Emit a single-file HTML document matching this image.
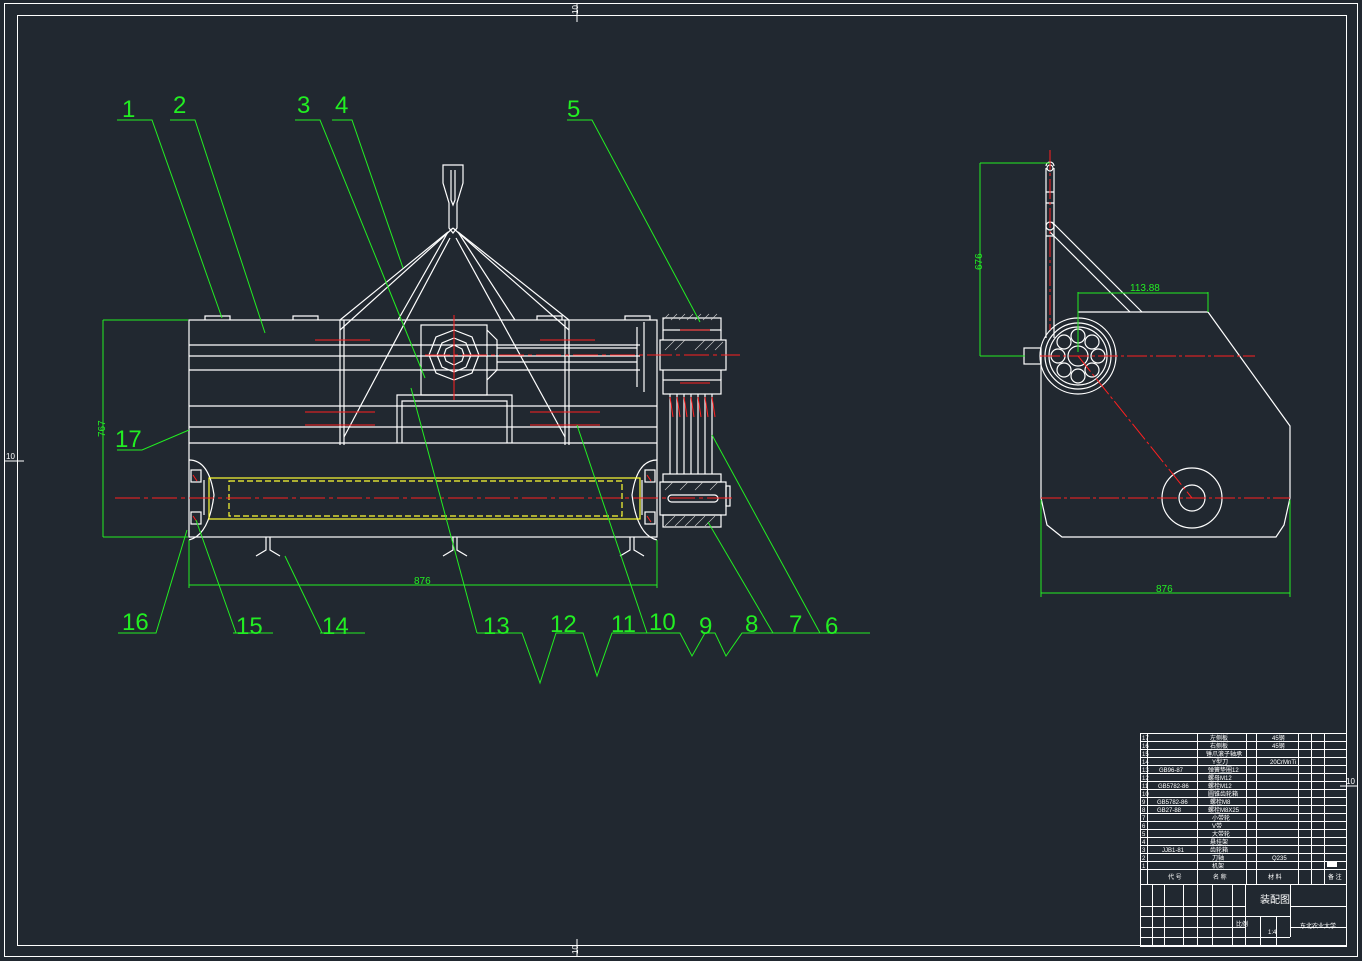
<!DOCTYPE html>
<html><head><meta charset="utf-8"><style>
html,body{margin:0;padding:0;background:#212830;}
svg{display:block}
text{font-family:"Liberation Sans","Noto Sans CJK SC",sans-serif;}
</style></head><body>
<svg width="1362" height="961" viewBox="0 0 1362 961" xmlns="http://www.w3.org/2000/svg">
<rect width="1362" height="961" fill="#212830"/>
<g fill="none" stroke="#ffffff" stroke-width="1">
<rect x="4.5" y="3.5" width="1353" height="953"/>
<rect x="17.5" y="15.5" width="1329" height="930"/>
<line x1="577" y1="3" x2="577" y2="22"/><line x1="577" y1="939" x2="577" y2="957"/>
<line x1="4" y1="461" x2="24" y2="461"/><line x1="1340" y1="786" x2="1358" y2="786"/>
</g>
<g fill="#fff" font-size="8"><text x="572" y="12" transform="rotate(-90 576 10)">10</text><text x="572" y="952" transform="rotate(-90 576 950)">10</text><text x="6" y="459">10</text><text x="1346" y="784">10</text></g>

<!-- FRONT VIEW -->
<g fill="none" stroke="#ffffff" stroke-width="1.2">
<rect x="189" y="320" width="468" height="217"/>
<line x1="189" y1="345" x2="640" y2="345"/><line x1="189" y1="356" x2="640" y2="356"/>
<line x1="189" y1="370" x2="640" y2="370"/><line x1="189" y1="406" x2="657" y2="406"/>
<line x1="189" y1="427" x2="657" y2="427"/><line x1="189" y1="443" x2="657" y2="443"/>
<path d="M205 320 v-4 h25 v4 M293 320 v-4 h25 v4 M537 320 v-4 h25 v4 M625 320 v-4 h25 v4"/>
<path d="M340 320 v125 M344 320 v125 M565 320 v125 M569 320 v125"/>
<path d="M443 165 h20 v18 l-6 20 v25 l-4 5 l-4 -5 v-25 l-6 -20 z"/>
<path d="M451 170 v30 l2 5 l2 -5 v-30"/>
<path d="M448 232 L340 320 M458 232 L569 320 M450 238 L344 437 M456 238 L565 437 M448 232 L398 320 M458 232 L515 320"/>
<path d="M453 228 L340 330 M453 228 L569 330"/>
<rect x="421" y="325" width="66" height="70"/>
<polygon points="454,330 472,337 479,355 472,373 454,380 436,373 429,355 436,337"/>
<polygon points="454,338 466,343 471,355 466,367 454,372 442,367 437,355 442,343"/>
<polygon points="454,345 462,349 464,355 462,361 454,365 446,361 444,355 446,349"/>
<path d="M487 330 l10 10 v30 l-10 10"/>
<path d="M497 348 h140 M497 362 h140"/>
<path d="M637 327 v60 M644 322 v70"/>
<path d="M397 443 v-48 h115 v48 M402 443 v-42 h105 v42"/>
<rect x="663" y="318" width="58" height="12"/>
<rect x="660" y="340" width="66" height="30"/>
<rect x="663" y="380" width="58" height="14"/>
<path d="M663 330 v10 M721 330 v10 M663 370 v10 M721 370 v10"/>
<path d="M670 394 v80 M677 394 v80 M684 394 v80 M691 394 v80 M698 394 v80 M705 394 v80 M712 394 v80"/>
<rect x="660" y="482" width="66" height="33"/>
<rect x="663" y="474" width="58" height="8"/><rect x="663" y="515" width="58" height="12"/>
<rect x="726" y="486" width="4" height="20"/>
<rect x="668" y="495" width="50" height="7" rx="3.5"/>
<path d="M189 460 q20 0 25 35 q-5 40 -25 45"/>
<path d="M657 460 q-20 0 -25 35 q5 40 25 45"/>
<rect x="191" y="470" width="10" height="12"/><rect x="191" y="512" width="10" height="12"/>
<rect x="645" y="470" width="10" height="12"/><rect x="645" y="512" width="10" height="12"/>
<path d="M204 480 v35 M642 480 v35"/>
<path d="M266 537 v13 l-10 6 M270 537 v13 l10 6 M453 537 v13 l-10 6 M457 537 v13 l10 6 M630 537 v13 l-10 6 M634 537 v13 l10 6"/>
</g>
<g stroke="#d0d0d0" stroke-width="0.6" fill="none">
<path d="M663 320 l6 -6 M671 320 l6 -6 M679 320 l6 -6 M687 320 l6 -6 M695 320 l6 -6 M703 320 l6 -6 M711 320 l6 -6"/>
<path d="M665 350 l10 -10 M675 350 l10 -10 M695 350 l10 -10 M705 350 l10 -10 M715 350 l8 -8"/>
<path d="M665 526 l10 -10 M675 526 l10 -10 M685 526 l10 -10 M695 526 l10 -10 M705 526 l10 -10 M665 490 l8 -8 M680 490 l8 -8 M695 490 l8 -8 M710 490 l8 -8"/>
</g>
<g fill="none" stroke="#ffff33" stroke-width="1.2">
<rect x="209" y="478" width="431" height="41"/>
<rect x="229" y="481" width="393" height="35" stroke-dasharray="6 3"/>
</g>
<g stroke="#ff2020" stroke-width="1" fill="none">
<line x1="115" y1="498" x2="735" y2="498" stroke-dasharray="25 4 4 4"/>
<line x1="425" y1="355" x2="740" y2="355" stroke-dasharray="25 4 4 4"/>
<line x1="454" y1="315" x2="454" y2="400"/>
<path d="M315 340 h55 M305 412 h70 M305 425 h70 M540 340 h55 M530 412 h70 M530 425 h70 M680 330 h30 M680 383 h30"/>
<path d="M670 397 l3 20 M677 397 l3 20 M684 397 l3 20 M691 397 l3 20 M698 397 l3 20 M705 397 l3 20 M712 397 l3 20"/>
<path d="M193 475 l4 6 M193 516 l4 6 M647 475 l4 6 M647 516 l4 6"/>
</g>
<g stroke="#22ee22" stroke-width="1" fill="none">
<path d="M103 320 h85 M103 537 h85 M103 320 v217"/>
<path d="M189 540 v48 M657 540 v48 M189 585 h468"/>
<path d="M117 120 h35 L222 318"/>
<path d="M170 120 h25 L265 333"/>
<path d="M295 120 h25 L425 378"/>
<path d="M332 120 h20 L403 268"/>
<path d="M567 120 h25 L700 322"/>
<path d="M117 450 h25 L189 430"/>
<path d="M118 633 h38 L187 530"/>
<path d="M233 633 h40 M236 633 L196 520"/>
<path d="M320 633 h45 M322 633 L285 556"/>
<path d="M477 633 L411 388 M477 633 h45 L540 683 L556 633 h27 L597 676 L612 633 h35"/>
<path d="M647 633 L577 425 M647 633 h33 L692 656 L705 633 h10 L726 656 L742 633 h128"/>
<path d="M773 633 L708 522 M820 633 L712 435"/>
</g>
<g fill="#22ee22" font-size="10"><text x="90" y="438" transform="rotate(-90 97 430)">767</text><text x="414" y="584">876</text></g>
<g fill="#22ee22" font-size="24" font-family="Liberation Sans,sans-serif">
<text x="122" y="117">1</text><text x="173" y="113">2</text><text x="297" y="113">3</text><text x="335" y="113">4</text><text x="567" y="117">5</text>
<text x="115" y="447">17</text><text x="122" y="630">16</text><text x="236" y="634">15</text><text x="322" y="634">14</text>
<text x="483" y="634">13</text><text x="550" y="632">12</text><text x="611" y="632">11</text><text x="649" y="630">10</text>
<text x="699" y="634">9</text><text x="745" y="632">8</text><text x="789" y="632">7</text><text x="825" y="634">6</text>
</g>

<!-- SIDE VIEW -->
<g fill="none" stroke="#fff" stroke-width="1.2">
<path d="M1046 168 v170 M1054 168 v170 M1046 166 a4 4 0 0 1 8 0"/>
<circle cx="1050" cy="168" r="3"/><circle cx="1050" cy="226" r="4"/>
<path d="M1046 192 h8 M1046 203 h8 M1046 236 h8"/>
<path d="M1052 222 L1142 312 M1050 232 L1130 312"/>
<path d="M1078 312 H1208 L1290 426 V498 L1284 525 L1276 537 H1062 L1047 525 L1041 498 V355"/>
<circle cx="1078" cy="356" r="38"/><circle cx="1078" cy="356" r="33"/><circle cx="1078" cy="356" r="29"/>
<circle cx="1078" cy="356" r="10"/>
<circle cx="1078" cy="336" r="7"/><circle cx="1092" cy="342" r="7"/><circle cx="1098" cy="356" r="7"/><circle cx="1092" cy="370" r="7"/>
<circle cx="1078" cy="376" r="7"/><circle cx="1064" cy="370" r="7"/><circle cx="1058" cy="356" r="7"/><circle cx="1064" cy="342" r="7"/>
<rect x="1024" y="348" width="17" height="16"/>
<circle cx="1192" cy="498" r="30"/><circle cx="1192" cy="498" r="13"/>
</g>
<g stroke="#ff2020" fill="none" stroke-width="1">
<line x1="1050" y1="150" x2="1050" y2="330" stroke-dasharray="20 3 3 3"/>
<line x1="1040" y1="356" x2="1255" y2="356" stroke-dasharray="20 3 3 3"/>
<line x1="1041" y1="498" x2="1290" y2="498" stroke-dasharray="20 3 3 3"/>
<line x1="1078" y1="356" x2="1192" y2="498" stroke-dasharray="20 3 3 3"/>
</g>
<g stroke="#22ee22" fill="none" stroke-width="1">
<path d="M980 163 h70 M980 356 h45 M980 163 v193"/>
<path d="M1078 292 v60 M1208 292 v20 M1078 293 h130"/>
<path d="M1041 500 v97 M1290 500 v97 M1041 593 h249"/>
</g>
<g fill="#22ee22" font-size="10"><text x="966" y="266" transform="rotate(-90 976 260)">676</text><text x="1130" y="291">113.88</text><text x="1156" y="592">876</text></g>

<!-- TITLE BLOCK -->
<g stroke="#fff" stroke-width="1" fill="none">
<rect x="1140.5" y="733.5" width="206" height="213"/>
<path d="M1140 741.5h206 M1140 749.5h206 M1140 757.5h206 M1140 765.5h206 M1140 773.5h206 M1140 781.5h206 M1140 789.5h206 M1140 797.5h206 M1140 805.5h206 M1140 813.5h206 M1140 821.5h206 M1140 829.5h206 M1140 837.5h206 M1140 845.5h206 M1140 853.5h206 M1140 861.5h206 M1140 869.5h206 M1140 884.5h206"/>
<path d="M1147.5 733v151 M1197.5 733v151 M1246.5 733v151 M1256.5 733v151 M1298.5 733v151 M1311.5 733v151 M1324.5 733v151"/>
<path d="M1140 906.5h105 M1140 916.5h150 M1140 927.5h105 M1140 937.5h150 M1290 906.5h56 M1290 927.5h56"/>
<path d="M1152.5 884v62 M1164.5 884v62 M1183.5 884v62 M1197.5 884v62 M1212.5 884v62 M1232.5 884v62 M1245.5 884v62 M1290.5 884v53 M1260.5 916v30 M1276.5 916v30"/>
</g>
<rect x="1327" y="862" width="10" height="5" fill="#fff"/>
<g fill="#fff" font-size="6">
<text x="1142" y="740">17</text><text x="1142" y="748">16</text><text x="1142" y="756">15</text><text x="1142" y="764">14</text><text x="1142" y="772">13</text><text x="1142" y="780">12</text><text x="1142" y="788">11</text><text x="1142" y="796">10</text><text x="1142" y="804">9</text><text x="1142" y="812">8</text><text x="1142" y="820">7</text><text x="1142" y="828">6</text><text x="1142" y="836">5</text><text x="1142" y="844">4</text><text x="1142" y="852">3</text><text x="1142" y="860">2</text><text x="1142" y="868">1</text>
<text x="1159" y="772">GB96-87</text><text x="1158" y="788">GB5782-86</text><text x="1157" y="804">GB5782-86</text><text x="1157" y="812">GB27-88</text><text x="1162" y="852">JJB1-81</text>
<text x="1210" y="740">左侧板</text><text x="1210" y="748">右侧板</text><text x="1206" y="756">锤爪滚子轴承</text><text x="1212" y="764">Y型刀</text><text x="1208" y="772">弹簧垫圈12</text><text x="1208" y="780">螺母M12</text><text x="1208" y="788">螺栓M12</text><text x="1208" y="796">圆锥齿轮箱</text><text x="1210" y="804">螺栓M8</text><text x="1208" y="812">螺栓M8X25</text><text x="1212" y="820">小带轮</text><text x="1212" y="828">V带</text><text x="1212" y="836">大带轮</text><text x="1210" y="844">悬挂架</text><text x="1210" y="852">齿轮箱</text><text x="1212" y="860">刀轴</text><text x="1212" y="868">机架</text>
<text x="1272" y="740">45钢</text><text x="1272" y="748">45钢</text><text x="1270" y="764">20CrMnTi</text><text x="1272" y="860">Q235</text>
<text x="1168" y="879">代 号</text><text x="1213" y="879">名 称</text><text x="1268" y="879">材 料</text><text x="1328" y="879">备 注</text>
<text x="1236" y="926">比例</text><text x="1268" y="934">1:4</text><text x="1300" y="928">东北农业大学</text>
</g>
<text x="1260" y="903" fill="#fff" font-size="10" font-family="Noto Sans CJK SC,sans-serif">装配图</text>
</svg>
</body></html>
